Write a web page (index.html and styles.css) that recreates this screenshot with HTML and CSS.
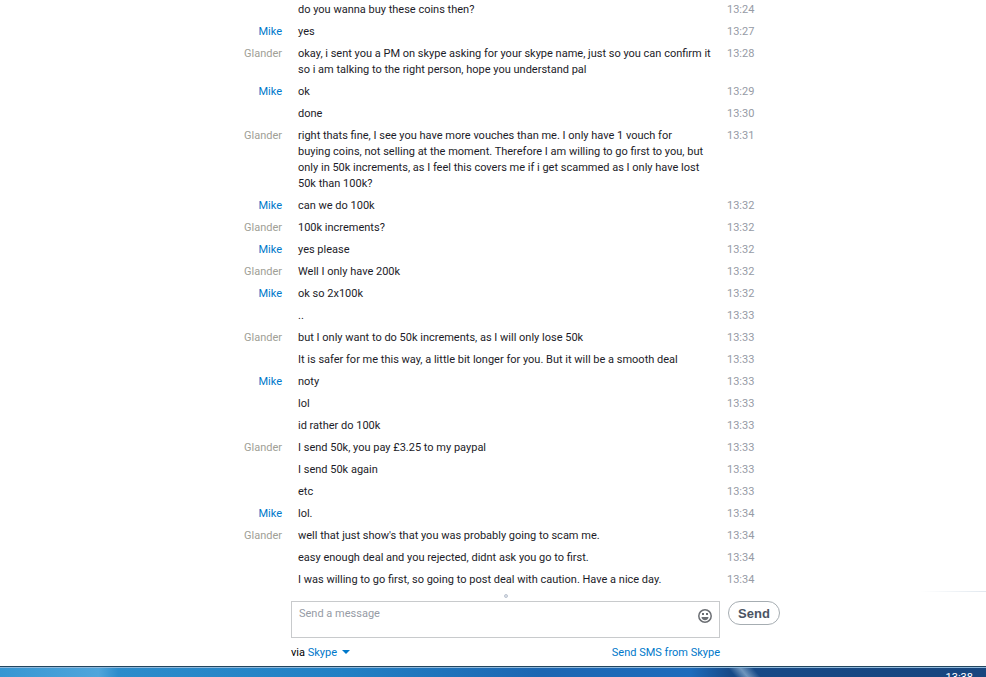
FILE: index.html
```html
<!DOCTYPE html>
<html lang="en">
<head>
    <meta charset="UTF-8">
    <meta name="viewport" content="width=device-width, initial-scale=1.0">
    <title>Skype chat</title>
    <link rel="stylesheet" href="styles.css">
</head>
<body>

<main>
    <div class="messages">
        <div class="message"><span class="name"></span><p>do you wanna buy these coins then?</p><time>13:24</time></div>
        <div class="message"><span class="name me">Mike</span><p>yes</p><time>13:27</time></div>
        <div class="message"><span class="name">Glander</span><p>okay, i sent you a PM on skype asking for your skype name, just so you can confirm it<br>so i am talking to the right person, hope you understand pal</p><time>13:28</time></div>
        <div class="message"><span class="name me">Mike</span><p>ok</p><time>13:29</time></div>
        <div class="message"><span class="name"></span><p>done</p><time>13:30</time></div>
        <div class="message"><span class="name">Glander</span><p>right thats fine, I see you have more vouches than me. I only have 1 vouch for<br>buying coins, not selling at the moment. Therefore I am willing to go first to you, but<br>only in 50k increments, as I feel this covers me if i get scammed as I only have lost<br>50k than 100k?</p><time>13:31</time></div>
        <div class="message"><span class="name me">Mike</span><p>can we do 100k</p><time>13:32</time></div>
        <div class="message"><span class="name">Glander</span><p>100k increments?</p><time>13:32</time></div>
        <div class="message"><span class="name me">Mike</span><p>yes please</p><time>13:32</time></div>
        <div class="message"><span class="name">Glander</span><p>Well I only have 200k</p><time>13:32</time></div>
        <div class="message"><span class="name me">Mike</span><p>ok so 2x100k</p><time>13:32</time></div>
        <div class="message"><span class="name"></span><p>..</p><time>13:33</time></div>
        <div class="message"><span class="name">Glander</span><p>but I only want to do 50k increments, as I will only lose 50k</p><time>13:33</time></div>
        <div class="message"><span class="name"></span><p>It is safer for me this way, a little bit longer for you. But it will be a smooth deal</p><time>13:33</time></div>
        <div class="message"><span class="name me">Mike</span><p>noty</p><time>13:33</time></div>
        <div class="message"><span class="name"></span><p>lol</p><time>13:33</time></div>
        <div class="message"><span class="name"></span><p>id rather do 100k</p><time>13:33</time></div>
        <div class="message"><span class="name">Glander</span><p>I send 50k, you pay £3.25 to my paypal</p><time>13:33</time></div>
        <div class="message"><span class="name"></span><p>I send 50k again</p><time>13:33</time></div>
        <div class="message"><span class="name"></span><p>etc</p><time>13:33</time></div>
        <div class="message"><span class="name me">Mike</span><p>lol.</p><time>13:34</time></div>
        <div class="message"><span class="name">Glander</span><p>well that just show's that you was probably going to scam me.</p><time>13:34</time></div>
        <div class="message"><span class="name"></span><p>easy enough deal and you rejected, didnt ask you go to first.</p><time>13:34</time></div>
        <div class="message"><span class="name"></span><p>I was willing to go first, so going to post deal with caution. Have a nice day.</p><time>13:34</time></div>
    </div>

    <form class="composer">
        <div class="grip"></div>
        <div class="box">
            <textarea placeholder="Send a message" aria-label="Send a message" rows="1"></textarea>
            <button type="button" class="smiley" aria-label="Emoticons">
                <svg width="14" height="14" viewBox="0 0 14 14">
                    <circle cx="7" cy="7" r="6.2" fill="none" stroke="#6b6e73" stroke-width="1.5"/>
                    <path d="M4 4h2v2H4zM8 4h2v2H8z" fill="#6b6e73"/>
                    <path d="M3.500 8h7c0 2-1.500 3.200-3.500 3.200S3.500 10 3.500 8z" fill="#6b6e73"/>
                </svg>
            </button>
        </div>
        <button type="submit" class="send">Send</button>
        <div class="options">
            <span>via <a href="#">Skype <svg width="8" height="4" viewBox="0 0 8 4"><path d="M0 0h8L4 4z" fill="#0078ca"/></svg></a></span>
            <a href="#">Send SMS from Skype</a>
        </div>
    </form>
</main>

<footer class="taskbar">
    <time>13:38</time>
</footer>

</body>
</html>
```
FILE: styles.css
```css
body {
    font-family: Tahoma, Roboto, sans-serif;
    font-size: 11px;
    line-height: 16px;
    margin: 0;
    height: 100vh;
    overflow: hidden;
    background: #fff;
    color: #1c1c28;
}
main {
    position: relative;
}
a {
    color: #0078ca;
    text-decoration: none;
}
.messages {
    display: flex;
    flex-direction: column;
    gap: 6px;
    max-width: 574px;
    margin: 0 auto;
    padding-top: 2px;
}
.message {
    display: grid;
    grid-template-columns: 76px minmax(0, 1fr) 53px;
    gap: 16px;
}
.message p {
    margin: 0;
    white-space: nowrap;
}
.name {
    color: #a0a096;
    text-align: right;
}
.name.me {
    color: #0078ca;
}
.message time {
    color: #969ba5;
}
.composer {
    display: grid;
    grid-template-columns: 1fr 52px;
    column-gap: 8px;
    max-width: 489px;
    margin: 0 auto;
    padding-left: 85px;
}
.grip {
    grid-column: 1;
    width: 2px;
    height: 2px;
    margin: 6px auto 3px;
    border: 1px solid #bcc4d0;
    border-radius: 50%;
    background: #dde2ea;
}
/* faded edge of the side panel */
main::after {
    content: "";
    position: absolute;
    right: 0;
    bottom: 74px;
    width: 66px;
    height: 1px;
    background: linear-gradient(to right, #fff, #e1e8ef);
}
.box {
    grid-column: 1;
    display: flex;
    align-items: flex-start;
    border: 1px solid #c8cacc;
    height: 35px;
}
.box textarea {
    flex: 1;
    height: 32px;
    box-sizing: border-box;
    padding: 4px 7px;
    border: none;
    outline: none;
    resize: none;
    background: none;
    font: inherit;
}
.box textarea::placeholder {
    color: #969ba5;
}
.smiley {
    display: flex;
    margin: 7px 7px 0 0;
    padding: 0;
    border: none;
    background: none;
}
.send {
    height: 24px;
    padding: 0;
    border: 1px solid #a6adb2;
    border-radius: 12px;
    background: #fff;
    color: #4b5564;
    font: bold 13px "Liberation Sans", Arial, sans-serif;
}
.options {
    grid-column: 1;
    display: flex;
    justify-content: space-between;
    padding: 7px 0 5px;
    color: #000;
}
.options svg {
    margin-left: 2px;
    vertical-align: 2px;
}
.taskbar {
    box-sizing: border-box;
    height: 40px;
    padding: 3px 13px;
    border-top: 1px solid #23465f;
    box-shadow: inset 0 1px #8fb8dc;
    background:
        linear-gradient(50deg, transparent 35%, rgba(170, 200, 225, .6) 48%, transparent 62%) 728px 0 / 60px 40px no-repeat,
        linear-gradient(to right, #3696d2 0, #50a5db 10%, #2c8ccb 12%, #2280c4 35%, #1c66b2 55%, #1c6cbc 70%, #174a88 74%, #17457e 100%);
    color: #fff;
    text-align: right;
}
```
